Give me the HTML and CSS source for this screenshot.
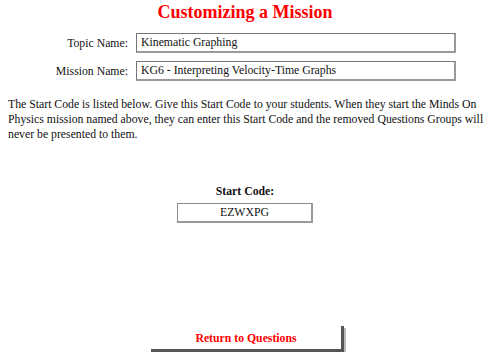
FILE: index.html
```html
<!DOCTYPE html>
<html lang="en">
<head>
  <meta charset="UTF-8" />
  <title>Customizing a Mission</title>
  <link rel="stylesheet" href="styles.css">
</head>
<body>
  <div class="pagina">
    <h1 class="titulo">Customizing a Mission</h1>

    <div class="datos">
      <label>Topic Name:</label>
      <div class="campo">Kinematic Graphing</div>
      <label>Mission Name:</label>
      <div class="campo">KG6 - Interpreting Velocity-Time Graphs</div>
    </div>

    <p class="texto">The Start Code is listed below. Give this Start Code to your students. When they start the Minds On Physics mission named above, they can enter this Start Code and the removed Questions Groups will never be presented to them.</p>

    <div class="codigo">
      <h3>Start Code:</h3>
      <div class="codigo-caja">EZWXPG</div>
    </div>

    <div class="acciones">
      <a href="#" class="btn-volver">Return to Questions</a>
    </div>
  </div>
</body>
</html>
```

FILE: styles.css
```css
body { margin: 0; padding: 0; background: #fff; font-family: 'Liberation Serif', 'Times New Roman', serif; font-size: 11.75px; color: #111; }
.pagina { width: 474px; margin-left: 8px; }
.titulo { margin: 0; padding-top: 1px; text-align: center; color: #f00; font-size: 18px; font-weight: bold; line-height: 22px; }
.datos { display: grid; grid-template-columns: 120px 320px; column-gap: 8px; row-gap: 8px; margin-top: 10px; align-items: center; }
.datos label { text-align: right; }
.campo { height: 17px; line-height: 17px; padding: 0 4px; border-style: solid; border-color: #767676 #9a9a9a #9a9a9a #767676; border-width: 1px 2px 2px 1px; }
.texto { margin: 16px -4px 0 0; line-height: 15px; }
.codigo { margin-top: 43px; text-align: center; }
.codigo h3 { margin: 0 0 5px; font-size: 11.75px; font-weight: bold; }
.codigo-caja { width: 133px; margin: 0 auto; height: 17px; line-height: 17px; border-style: solid; border-color: #8a8a8a #9a9a9a #9a9a9a #8a8a8a; border-width: 1px 2px 2px 1px; }
.acciones { margin-top: 103px; text-align: center; }
.btn-volver { display: inline-block; width: 190px; height: 23px; line-height: 25px; margin-left: 5px; color: #f00; font-weight: bold; text-decoration: none; border-right: 3px solid #555; border-bottom: 3px solid #555; box-shadow: 2px 2px 0 #bbb; }
```
